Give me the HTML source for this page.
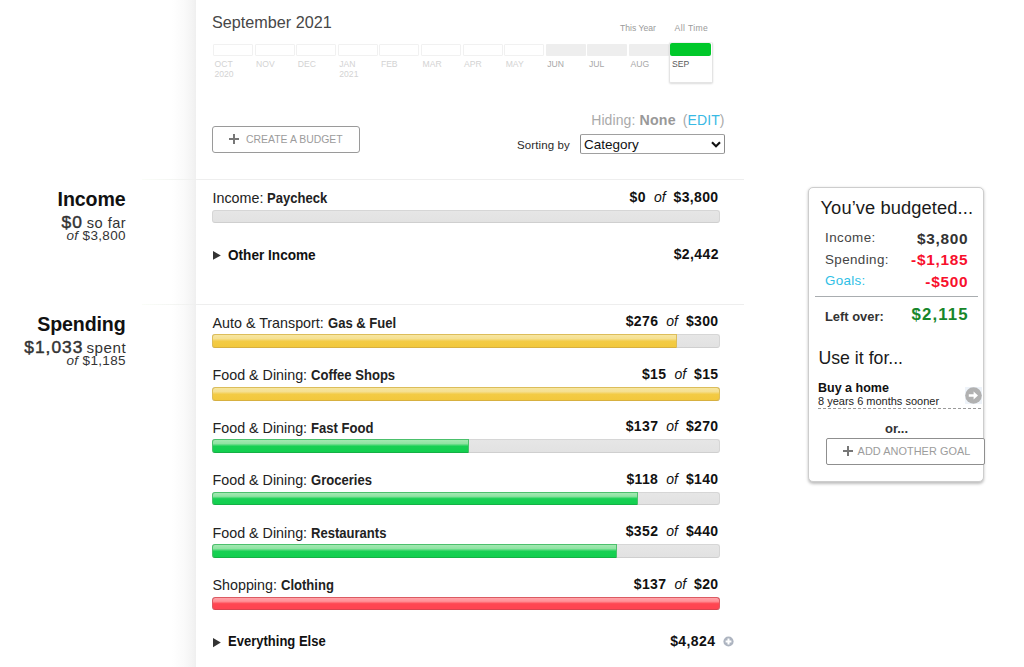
<!DOCTYPE html>
<html><head><meta charset="utf-8"><style>
html,body{margin:0;padding:0;background:#fff;width:1024px;height:667px;overflow:hidden;}
body{position:relative;font-family:"Liberation Sans",sans-serif;}
.t{position:absolute;line-height:1;white-space:nowrap;}
.r{position:absolute;}
.n{letter-spacing:0.35px;}
.of{font-weight:normal;margin:0 8px 0 8px;}
.t b{font-size:13.1px;}
.t b.lb{font-size:14.2px;display:inline-block;transform:scaleX(0.92);transform-origin:0 0;}
.t b.n{font-size:14px;}
.t b.big{font-size:17.4px;font-weight:normal;-webkit-text-stroke:0.45px #333;letter-spacing:1px;color:#333;}
b{font-weight:bold;}
</style></head><body>
<div class="r" style="left:0px;top:0px;width:196px;height:667px;background:linear-gradient(to right,#fff 0,#fff 172px,#fafafa 184px,#f3f3f3 193px,#efefef 196px);"></div>
<div class="t" style="left:212px;top:14.29px;font-size:16.2px;color:#474747;font-weight:normal;font-style:normal;">September 2021</div>
<div class="t" style="left:620px;top:23.72px;font-size:8.6px;color:#9a9a9a;font-weight:normal;font-style:normal;">This Year</div>
<div class="t" style="left:674.5px;top:23.72px;font-size:8.6px;color:#9a9a9a;font-weight:normal;font-style:normal;letter-spacing:0.4px;">All Time</div>
<div class="r" style="left:213.0px;top:43.5px;width:40px;height:12.3px;border:1px solid #f1f1f1;box-sizing:border-box;border-radius:1px;"></div>
<div class="t" style="left:214.5px;top:59.72px;font-size:8.6px;color:#d3d3d3;font-weight:normal;font-style:normal;">OCT</div>
<div class="t" style="left:214.5px;top:69.72px;font-size:8.6px;color:#d3d3d3;font-weight:normal;font-style:normal;">2020</div>
<div class="r" style="left:254.6px;top:43.5px;width:40px;height:12.3px;border:1px solid #f1f1f1;box-sizing:border-box;border-radius:1px;"></div>
<div class="t" style="left:256.1px;top:59.72px;font-size:8.6px;color:#d3d3d3;font-weight:normal;font-style:normal;">NOV</div>
<div class="r" style="left:296.2px;top:43.5px;width:40px;height:12.3px;border:1px solid #f1f1f1;box-sizing:border-box;border-radius:1px;"></div>
<div class="t" style="left:297.7px;top:59.72px;font-size:8.6px;color:#d3d3d3;font-weight:normal;font-style:normal;">DEC</div>
<div class="r" style="left:337.8px;top:43.5px;width:40px;height:12.3px;border:1px solid #f1f1f1;box-sizing:border-box;border-radius:1px;"></div>
<div class="t" style="left:339.3px;top:59.72px;font-size:8.6px;color:#d3d3d3;font-weight:normal;font-style:normal;">JAN</div>
<div class="t" style="left:339.3px;top:69.72px;font-size:8.6px;color:#d3d3d3;font-weight:normal;font-style:normal;">2021</div>
<div class="r" style="left:379.4px;top:43.5px;width:40px;height:12.3px;border:1px solid #f1f1f1;box-sizing:border-box;border-radius:1px;"></div>
<div class="t" style="left:380.9px;top:59.72px;font-size:8.6px;color:#d3d3d3;font-weight:normal;font-style:normal;">FEB</div>
<div class="r" style="left:421.0px;top:43.5px;width:40px;height:12.3px;border:1px solid #f1f1f1;box-sizing:border-box;border-radius:1px;"></div>
<div class="t" style="left:422.5px;top:59.72px;font-size:8.6px;color:#d3d3d3;font-weight:normal;font-style:normal;">MAR</div>
<div class="r" style="left:462.6px;top:43.5px;width:40px;height:12.3px;border:1px solid #f1f1f1;box-sizing:border-box;border-radius:1px;"></div>
<div class="t" style="left:464.1px;top:59.72px;font-size:8.6px;color:#d3d3d3;font-weight:normal;font-style:normal;">APR</div>
<div class="r" style="left:504.2px;top:43.5px;width:40px;height:12.3px;border:1px solid #f1f1f1;box-sizing:border-box;border-radius:1px;"></div>
<div class="t" style="left:505.7px;top:59.72px;font-size:8.6px;color:#d3d3d3;font-weight:normal;font-style:normal;">MAY</div>
<div class="r" style="left:545.8px;top:43.5px;width:40px;height:12.3px;background:#eeeeee;border-radius:1px;"></div>
<div class="t" style="left:547.3px;top:59.72px;font-size:8.6px;color:#a8a8a8;font-weight:normal;font-style:normal;">JUN</div>
<div class="r" style="left:587.4000000000001px;top:43.5px;width:40px;height:12.3px;background:#eeeeee;border-radius:1px;"></div>
<div class="t" style="left:588.9000000000001px;top:59.72px;font-size:8.6px;color:#a8a8a8;font-weight:normal;font-style:normal;">JUL</div>
<div class="r" style="left:629.0px;top:43.5px;width:40px;height:12.3px;background:#eeeeee;border-radius:1px;"></div>
<div class="t" style="left:630.5px;top:59.72px;font-size:8.6px;color:#a8a8a8;font-weight:normal;font-style:normal;">AUG</div>
<div class="r" style="left:668.5px;top:41.5px;width:44px;height:41px;border:1px solid #e4e4e4;border-top-color:#f0f0f0;box-sizing:border-box;border-radius:2px;box-shadow:0 1px 2px rgba(0,0,0,.14);background:#fff;"></div>
<div class="r" style="left:670.3px;top:43.4px;width:40.7px;height:12.3px;background:#00c82a;border-radius:2px;"></div>
<div class="t" style="left:672.1px;top:59.72px;font-size:8.6px;color:#5a5a5a;font-weight:normal;font-style:normal;">SEP</div>
<div class="r" style="left:212px;top:126px;width:147.5px;height:27px;border:1px solid #9a9a9a;box-sizing:border-box;border-radius:3px;"></div>
<div class="r" style="left:229px;top:138px;width:10px;height:2px;background:#777;"></div>
<div class="r" style="left:233px;top:134px;width:2px;height:10px;background:#777;"></div>
<div class="t" style="left:246px;top:134.95px;font-size:10.45px;color:#9c9c9c;font-weight:normal;font-style:normal;">CREATE A BUDGET</div>
<div class="t" style="right:299.5px;top:113.15px;font-size:14px;color:#aaa;font-weight:normal;font-style:normal;letter-spacing:0.1px;margin-right:-0.1px;"><span style="color:#aaa;letter-spacing:0.1px">Hiding: </span><b style="color:#999;font-size:14.2px;letter-spacing:0.2px">None</b><span style="color:#aaa;margin-left:7px">(</span><span style="color:#39b9e4">EDIT</span><span style="color:#aaa">)</span></div>
<div class="t" style="left:517px;top:140.27px;font-size:11.5px;color:#2a2a2a;font-weight:normal;font-style:normal;letter-spacing:0.1px;">Sorting by</div>
<div class="r" style="left:579.5px;top:134.3px;width:145.3px;height:19.8px;border:1.5px solid #a0a0a0;border-left-color:#8a8a8a;border-right-color:#8a8a8a;box-sizing:border-box;border-radius:2px;"></div>
<div class="t" style="left:584px;top:137.57px;font-size:13.5px;color:#111;font-weight:normal;font-style:normal;">Category</div>
<svg class="r" style="left:710px;top:140px" width="12" height="9" viewBox="0 0 12 9"><path d="M2 2.2 L6 6.3 L10 2.2" fill="none" stroke="#111" stroke-width="2.1"/></svg>
<div class="r" style="left:142px;top:179px;width:602px;height:1px;background:linear-gradient(to right,#fafdf8,#eeeeee 60px,#eeeeee);"></div>
<div class="r" style="left:142px;top:304px;width:602px;height:1px;background:linear-gradient(to right,#fafdf8,#eeeeee 60px,#eeeeee);"></div>
<div class="t" style="right:898.4px;top:190.11px;font-size:19.6px;color:#111;font-weight:bold;font-style:normal;letter-spacing:-0.1px;">Income</div>
<div class="t" style="right:898.4px;top:214.14px;font-size:14.6px;color:#333;font-weight:normal;font-style:normal;letter-spacing:0.45px;margin-right:-0.45px;"><b class="big">$0</b><span style="margin-left:4px">so far</span></div>
<div class="t" style="right:898.4px;top:228.97px;font-size:13.5px;color:#333;font-weight:normal;font-style:normal;letter-spacing:0.35px;margin-right:-0.35px;"><i>of</i> $3,800</div>
<div class="t" style="right:898.4px;top:314.91px;font-size:19.6px;color:#111;font-weight:bold;font-style:normal;letter-spacing:-0.1px;">Spending</div>
<div class="t" style="right:898.4px;top:338.93px;font-size:15.2px;color:#333;font-weight:normal;font-style:normal;letter-spacing:0.5px;margin-right:-0.5px;"><b class="big">$1,033</b><span style="margin-left:3px">spent</span></div>
<div class="t" style="right:898.4px;top:354.17px;font-size:13.5px;color:#333;font-weight:normal;font-style:normal;letter-spacing:0.35px;margin-right:-0.35px;"><i>of</i> $1,185</div>
<div class="t" style="left:212.5px;top:191.30px;font-size:14.3px;color:#222;font-weight:normal;font-style:normal;">Income: <b class="lb">Paycheck</b></div>
<div class="t" style="right:305.5px;top:189.65px;font-size:14px;color:#111;font-weight:normal;font-style:normal;"><b class="n">$0</b><i class="of">of</i><b class="n">$3,800</b></div>
<div class="r" style="left:212px;top:210px;width:508px;height:13px;background:linear-gradient(to bottom,#e6e6e6,#e2e2e2);border:1px solid #d6d6d6;border-bottom-color:#cfcfcf;box-sizing:border-box;border-radius:3px;"></div>
<div class="t" style="left:212.5px;top:315.70px;font-size:14.3px;color:#222;font-weight:normal;font-style:normal;">Auto &amp; Transport: <b class="lb">Gas &amp; Fuel</b></div>
<div class="t" style="right:305.5px;top:314.15px;font-size:14px;color:#111;font-weight:normal;font-style:normal;"><b class="n">$276</b><i class="of">of</i><b class="n">$300</b></div>
<div class="r" style="left:212px;top:334.2px;width:508px;height:13.8px;background:linear-gradient(to bottom,#e6e6e6,#e2e2e2);border:1px solid #d6d6d6;border-bottom-color:#cfcfcf;box-sizing:border-box;border-radius:3px;"></div>
<div class="r" style="left:212px;top:334.2px;width:464.5px;height:13.8px;background:linear-gradient(to bottom,#f7e6a0 0,#f5e092 30%,#f3cb45 52%,#f2c83c 100%);border:1px solid #dcbd5a;border-bottom-color:#d7b040;box-sizing:border-box;border-radius:3px 0 0 3px;"></div>
<div class="t" style="left:212.5px;top:368.20px;font-size:14.3px;color:#222;font-weight:normal;font-style:normal;">Food &amp; Dining: <b class="lb">Coffee Shops</b></div>
<div class="t" style="right:305.5px;top:366.65px;font-size:14px;color:#111;font-weight:normal;font-style:normal;"><b class="n">$15</b><i class="of">of</i><b class="n">$15</b></div>
<div class="r" style="left:212px;top:387px;width:508px;height:13.8px;background:linear-gradient(to bottom,#e6e6e6,#e2e2e2);border:1px solid #d6d6d6;border-bottom-color:#cfcfcf;box-sizing:border-box;border-radius:3px;"></div>
<div class="r" style="left:212px;top:387px;width:508px;height:13.8px;background:linear-gradient(to bottom,#f7e6a0 0,#f5e092 30%,#f3cb45 52%,#f2c83c 100%);border:1px solid #dcbd5a;border-bottom-color:#d7b040;box-sizing:border-box;border-radius:3.5px;"></div>
<div class="t" style="left:212.5px;top:420.70px;font-size:14.3px;color:#222;font-weight:normal;font-style:normal;">Food &amp; Dining: <b class="lb">Fast Food</b></div>
<div class="t" style="right:305.5px;top:419.15px;font-size:14px;color:#111;font-weight:normal;font-style:normal;"><b class="n">$137</b><i class="of">of</i><b class="n">$270</b></div>
<div class="r" style="left:212px;top:439.1px;width:508px;height:13.8px;background:linear-gradient(to bottom,#e6e6e6,#e2e2e2);border:1px solid #d6d6d6;border-bottom-color:#cfcfcf;box-sizing:border-box;border-radius:3px;"></div>
<div class="r" style="left:212px;top:439.1px;width:256.5px;height:13.8px;background:linear-gradient(to bottom,#a3e9b2 0,#8fe3a2 30%,#17d053 52%,#12cf4f 100%);border:1px solid #4cc06c;border-bottom-color:#15b045;box-sizing:border-box;border-radius:3px 0 0 3px;"></div>
<div class="t" style="left:212.5px;top:473.20px;font-size:14.3px;color:#222;font-weight:normal;font-style:normal;">Food &amp; Dining: <b class="lb">Groceries</b></div>
<div class="t" style="right:305.5px;top:471.65px;font-size:14px;color:#111;font-weight:normal;font-style:normal;"><b class="n">$118</b><i class="of">of</i><b class="n">$140</b></div>
<div class="r" style="left:212px;top:491.6px;width:508px;height:13.8px;background:linear-gradient(to bottom,#e6e6e6,#e2e2e2);border:1px solid #d6d6d6;border-bottom-color:#cfcfcf;box-sizing:border-box;border-radius:3px;"></div>
<div class="r" style="left:212px;top:491.6px;width:426px;height:13.8px;background:linear-gradient(to bottom,#a3e9b2 0,#8fe3a2 30%,#17d053 52%,#12cf4f 100%);border:1px solid #4cc06c;border-bottom-color:#15b045;box-sizing:border-box;border-radius:3px 0 0 3px;"></div>
<div class="t" style="left:212.5px;top:525.70px;font-size:14.3px;color:#222;font-weight:normal;font-style:normal;">Food &amp; Dining: <b class="lb">Restaurants</b></div>
<div class="t" style="right:305.5px;top:524.15px;font-size:14px;color:#111;font-weight:normal;font-style:normal;"><b class="n">$352</b><i class="of">of</i><b class="n">$440</b></div>
<div class="r" style="left:212px;top:544.1px;width:508px;height:13.8px;background:linear-gradient(to bottom,#e6e6e6,#e2e2e2);border:1px solid #d6d6d6;border-bottom-color:#cfcfcf;box-sizing:border-box;border-radius:3px;"></div>
<div class="r" style="left:212px;top:544.1px;width:405px;height:13.8px;background:linear-gradient(to bottom,#a3e9b2 0,#8fe3a2 30%,#17d053 52%,#12cf4f 100%);border:1px solid #4cc06c;border-bottom-color:#15b045;box-sizing:border-box;border-radius:3px 0 0 3px;"></div>
<div class="t" style="left:212.5px;top:578.20px;font-size:14.3px;color:#222;font-weight:normal;font-style:normal;">Shopping: <b class="lb">Clothing</b></div>
<div class="t" style="right:305.5px;top:576.65px;font-size:14px;color:#111;font-weight:normal;font-style:normal;"><b class="n">$137</b><i class="of">of</i><b class="n">$20</b></div>
<div class="r" style="left:212px;top:596.6px;width:508px;height:13.8px;background:linear-gradient(to bottom,#e6e6e6,#e2e2e2);border:1px solid #d6d6d6;border-bottom-color:#cfcfcf;box-sizing:border-box;border-radius:3px;"></div>
<div class="r" style="left:212px;top:596.6px;width:508px;height:13.8px;background:linear-gradient(to bottom,#ffa4aa 0,#ff9197 30%,#ff4652 52%,#ff4350 100%);border:1px solid #dc5a62;border-bottom-color:#d8434e;box-sizing:border-box;border-radius:3.5px;"></div>
<svg class="r" style="left:213px;top:251.2px" width="9" height="10" viewBox="0 0 9 10"><path d="M0 0 L7.8 4.4 L0 8.8Z" fill="#333"/></svg>
<div class="t" style="left:228px;top:248.01px;font-size:14.4px;color:#111;font-weight:bold;font-style:normal;transform:scaleX(0.945);transform-origin:0 0;">Other Income</div>
<div class="t" style="right:305.5px;top:246.75px;font-size:14px;color:#111;font-weight:bold;font-style:normal;letter-spacing:0.4px;margin-right:-0.4px;">$2,442</div>
<svg class="r" style="left:213px;top:637.8px" width="9" height="10" viewBox="0 0 9 10"><path d="M0 0 L7.8 4.6 L0 9.2Z" fill="#333"/></svg>
<div class="t" style="left:227.5px;top:634.41px;font-size:14.4px;color:#111;font-weight:bold;font-style:normal;transform:scaleX(0.905);transform-origin:0 0;">Everything Else</div>
<div class="t" style="right:309px;top:633.75px;font-size:14px;color:#111;font-weight:bold;font-style:normal;letter-spacing:0.4px;margin-right:-0.4px;">$4,824</div>
<svg class="r" style="left:722.5px;top:635.5px" width="11" height="11" viewBox="0 0 11 11"><circle cx="5.5" cy="5.5" r="5.1" fill="#adb4c0"/><path d="M5.5 2.6V8.4M2.6 5.5H8.4" stroke="#fff" stroke-width="2"/></svg>
<div class="r" style="left:807.5px;top:186.5px;width:176.5px;height:295px;border:1px solid #cdcdcd;box-sizing:border-box;border-radius:5px;box-shadow:0 1.5px 3px rgba(0,0,0,.26);background:#fff;"></div>
<div class="t" style="left:820.5px;top:199.31px;font-size:18.3px;color:#1a1a1a;font-weight:normal;font-style:normal;letter-spacing:0.1px;">You’ve budgeted...</div>
<div class="t" style="left:825px;top:231.16px;font-size:13.4px;color:#444;font-weight:normal;font-style:normal;letter-spacing:0.45px;">Income:</div>
<div class="t" style="right:56.5px;top:230.96px;font-size:15.4px;color:#333;font-weight:bold;font-style:normal;letter-spacing:0.7px;margin-right:-0.7px;">$3,800</div>
<div class="t" style="left:825px;top:252.66px;font-size:13.4px;color:#444;font-weight:normal;font-style:normal;letter-spacing:0.4px;">Spending:</div>
<div class="t" style="right:56.5px;top:251.96px;font-size:15.4px;color:#f8102c;font-weight:bold;font-style:normal;letter-spacing:0.7px;margin-right:-0.7px;">-$1,185</div>
<div class="t" style="left:825px;top:274.36px;font-size:13.4px;color:#2ec0e6;font-weight:normal;font-style:normal;letter-spacing:0.3px;">Goals:</div>
<div class="t" style="right:56.5px;top:273.96px;font-size:15.4px;color:#f8102c;font-weight:bold;font-style:normal;letter-spacing:0.7px;margin-right:-0.7px;">-$500</div>
<div class="r" style="left:815px;top:296px;width:163px;height:1px;background:#a9adb0;"></div>
<div class="t" style="left:825px;top:310.68px;font-size:12.9px;color:#333;font-weight:bold;font-style:normal;">Left over:</div>
<div class="t" style="right:56.5px;top:307.38px;font-size:16.8px;color:#17862a;font-weight:bold;font-style:normal;letter-spacing:1.1px;margin-right:-1.1px;">$2,115</div>
<div class="t" style="left:818.5px;top:350.02px;font-size:17.7px;color:#1a1a1a;font-weight:normal;font-style:normal;">Use it for...</div>
<div class="t" style="left:818px;top:382.22px;font-size:12.5px;color:#111;font-weight:bold;font-style:normal;">Buy a home</div>
<div class="t" style="left:818px;top:395.69px;font-size:11px;color:#222;font-weight:normal;font-style:normal;">8 years 6 months sooner</div>
<div class="r" style="left:818px;top:408px;width:163px;height:0px;border-top:1px dashed #9a9a9a;"></div>
<div class="r" style="left:964.5px;top:387px;width:17px;height:17px;background:#eef3f9;"></div>
<svg class="r" style="left:964.5px;top:386.8px" width="17" height="17" viewBox="0 0 17 17"><circle cx="8.5" cy="8.5" r="8.3" fill="#b1b1b1"/><path d="M3.8 7.3H8.6V4.6L13 8.5L8.6 12.4V9.7H3.8Z" fill="#fff"/></svg>
<div class="t" style="left:596.5px;width:600px;text-align:center;top:421.70px;font-size:13px;color:#333;font-weight:bold;font-style:normal;">or...</div>
<div class="r" style="left:825.8px;top:437.8px;width:159.5px;height:27px;border:1px solid #8f8f8f;box-sizing:border-box;border-radius:2px;background:#fff;"></div>
<div class="r" style="left:843px;top:450px;width:9.5px;height:2px;background:#777;"></div>
<div class="r" style="left:846.75px;top:446.25px;width:2px;height:9.5px;background:#777;"></div>
<div class="t" style="left:857.6px;top:445.97px;font-size:10.9px;color:#9c9c9c;font-weight:normal;font-style:normal;letter-spacing:0.05px;">ADD ANOTHER GOAL</div>
</body></html>
